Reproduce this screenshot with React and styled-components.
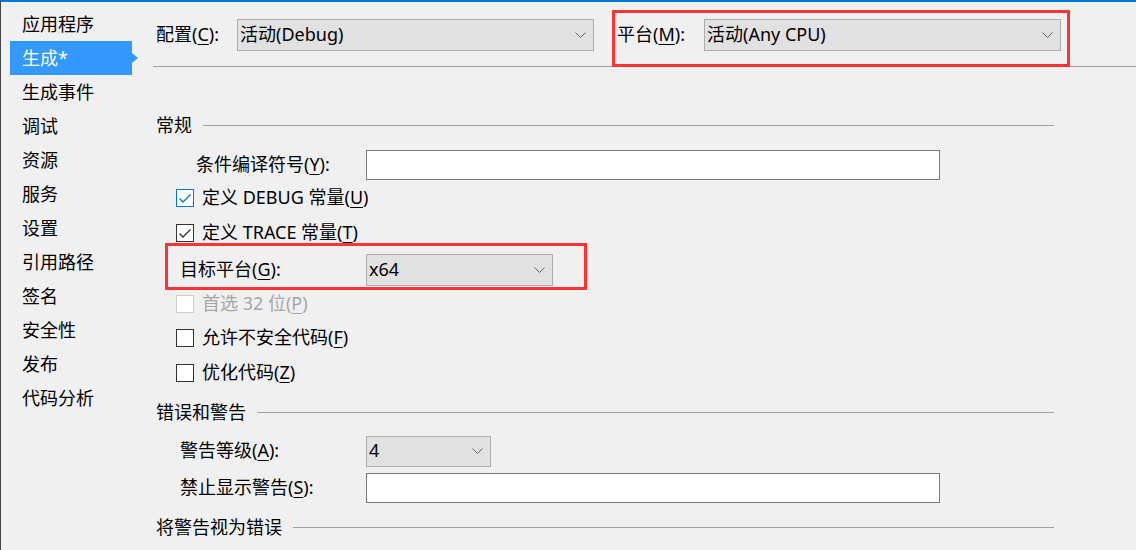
import React from "react";
import styled, { createGlobalStyle, css } from "styled-components";

const Global = createGlobalStyle`
  html, body { margin: 0; padding: 0; overflow: hidden; }
  body {
    font-family: "Noto Sans", "Noto Sans CJK SC", sans-serif;
    font-size: 18px;
    color: #000;
    background: #f0f0f0;
  }
  *, *::before, *::after { box-sizing: border-box; }
`;

const Window = styled.div`
  width: 1136px;
  height: 550px;
  display: flex;
  background: #f0f0f0;
  border-top: 2px solid #0078d7;
  border-left: 1px solid #454545;
  overflow: hidden;
`;

const Sidebar = styled.nav`
  width: 137px;
  flex: none;
  padding-top: 5px;
  display: flex;
  flex-direction: column;
`;

const NavItem = styled.div`
  position: relative;
  height: 34px;
  width: 122px;
  margin-left: 9px;
  padding-left: 12px;
  padding-top: 1px;
  display: flex;
  align-items: center;
  line-height: 1.2;
  white-space: nowrap;
  ${(p) =>
    p.$active &&
    css`
      background: #3399ff;
      color: #fff;
      &::after {
        content: "";
        position: absolute;
        left: 100%;
        top: 50%;
        transform: translateY(-50%);
        border-left: 6px solid #3399ff;
        border-top: 5.5px solid transparent;
        border-bottom: 5.5px solid transparent;
      }
    `}
`;

const Main = styled.main`
  flex: 1;
  margin-left: 15px;
  display: flex;
  flex-direction: column;
  min-width: 0;
`;

const TopBar = styled.div`
  height: 65px;
  flex: none;
  padding-top: 2px;
  padding-left: 3px;
  border-bottom: 1px solid #a0a0a0;
  display: flex;
  align-items: center;
`;

const TopGroup = styled.div`
  position: relative;
  display: flex;
  align-items: center;
  margin-left: ${(p) => p.$ml || 0}px;
  ${(p) =>
    p.$highlight &&
    css`
      &::after {
        content: "";
        position: absolute;
        left: -5px;
        top: -9px;
        width: 458px;
        height: 57px;
        border: 3px solid #ff3333;
        pointer-events: none;
      }
    `}
`;

const TopLabel = styled.span`
  width: ${(p) => p.$w}px;
  line-height: 1.2;
  white-space: nowrap;
`;

const Mn = styled.u`
  text-decoration: underline;
  text-decoration-thickness: 1px;
  text-underline-offset: 3px;
`;

const Select = styled.div`
  width: ${(p) => p.$w}px;
  height: ${(p) => p.$h || 32}px;
  background: #e1e1e1;
  border: 1px solid #adadad;
  display: flex;
  align-items: center;
  justify-content: space-between;
  padding: 0 7px 0 2px;
  line-height: 1.2;
  white-space: nowrap;
  flex: none;
`;

const TextBox = styled.div`
  width: ${(p) => p.$w}px;
  height: 30px;
  background: #fff;
  border: 1px solid #7a7a7a;
  flex: none;
`;

const Content = styled.div`
  padding-left: 3px;
  padding-right: 82px;
  display: flex;
  flex-direction: column;
`;

const Row = styled.div`
  position: relative;
  height: 32px;
  margin-top: ${(p) => p.$mt}px;
  display: flex;
  align-items: center;
  line-height: 1.2;
  white-space: nowrap;
  ${(p) =>
    p.$highlight &&
    css`
      &::after {
        content: "";
        position: absolute;
        left: 9px;
        top: -11px;
        width: 422px;
        height: 47px;
        border: 3px solid #ff3333;
        pointer-events: none;
      }
    `}
`;

const HeaderLine = styled.div`
  flex: 1;
  height: 1px;
  background: #a0a0a0;
  margin-left: 11px;
  margin-bottom: 2px;
`;

const FieldLabel = styled.span`
  width: 210px;
  padding-left: ${(p) => p.$indent}px;
  flex: none;
`;

const CheckRow = styled(Row)`
  padding-left: 20px;
  color: ${(p) => (p.$disabled ? "#a6a6a6" : "#000")};
`;

const Box = styled.span`
  width: 18px;
  height: 18px;
  flex: none;
  margin-right: 8px;
  background: #fff;
  border: 1px solid
    ${(p) => (p.$disabled ? "#cccccc" : p.$hover ? "#0078d7" : "#333333")};
  display: flex;
  align-items: center;
  justify-content: center;
`;

const Chevron = () => (
  <svg width="11" height="6" viewBox="0 0 11 6" aria-hidden="true">
    <path d="M0.5 0.5 L5.5 5.5 L10.5 0.5" fill="none" stroke="#606060" strokeWidth="1" />
  </svg>
);

const CheckMark = ({ color }) => (
  <svg width="16" height="16" viewBox="0 0 16 16" aria-hidden="true">
    <polyline points="2.5,8.5 6,12 13.5,4.5" fill="none" stroke={color} strokeWidth="1.4" />
  </svg>
);

function Checkbox({ checked, hover, disabled, children, mt }) {
  return (
    <CheckRow $mt={mt} $disabled={disabled}>
      <Box $hover={hover} $disabled={disabled}>
        {checked && <CheckMark color={hover ? "#0078d7" : "#333"} />}
      </Box>
      <span>{children}</span>
    </CheckRow>
  );
}

const navItems = [
  "应用程序",
  "生成*",
  "生成事件",
  "调试",
  "资源",
  "服务",
  "设置",
  "引用路径",
  "签名",
  "安全性",
  "发布",
  "代码分析",
];

export default function App() {
  return (
    <>
      <Global />
      <Window>
        <Sidebar>
          {navItems.map((n, i) => (
            <NavItem key={n} $active={i === 1}>
              {n}
            </NavItem>
          ))}
        </Sidebar>
        <Main>
          <TopBar>
            <TopGroup>
              <TopLabel $w={81}>
                配置(<Mn>C</Mn>):
              </TopLabel>
              <Select $w={357}>
                <span>活动(Debug)</span>
                <Chevron />
              </Select>
            </TopGroup>
            <TopGroup $ml={23} $highlight>
              <TopLabel $w={87}>
                平台(<Mn>M</Mn>):
              </TopLabel>
              <Select $w={357}>
                <span>活动(Any CPU)</span>
                <Chevron />
              </Select>
            </TopGroup>
          </TopBar>
          <Content>
            <Row $mt={43}>
              <span>常规</span>
              <HeaderLine />
            </Row>
            <Row $mt={7}>
              <FieldLabel $indent={40}>
                条件编译符号(<Mn>Y</Mn>):
              </FieldLabel>
              <TextBox $w={574} />
            </Row>
            <Checkbox mt={1} checked hover>
              定义 DEBUG 常量(<Mn>U</Mn>)
            </Checkbox>
            <Checkbox mt={3} checked>
              定义 TRACE 常量(<Mn>T</Mn>)
            </Checkbox>
            <Row $mt={5} $highlight>
              <FieldLabel $indent={24}>
                目标平台(<Mn>G</Mn>):
              </FieldLabel>
              <Select $w={187}>
                <span>x64</span>
                <Chevron />
              </Select>
            </Row>
            <Checkbox mt={2} disabled>
              首选 32 位(<Mn>P</Mn>)
            </Checkbox>
            <Checkbox mt={2}>
              允许不安全代码(<Mn>F</Mn>)
            </Checkbox>
            <Checkbox mt={3}>
              优化代码(<Mn>Z</Mn>)
            </Checkbox>
            <Row $mt={8}>
              <span>错误和警告</span>
              <HeaderLine />
            </Row>
            <Row $mt={6}>
              <FieldLabel $indent={24}>
                警告等级(<Mn>A</Mn>):
              </FieldLabel>
              <Select $w={125} $h={31}>
                <span>4</span>
                <Chevron />
              </Select>
            </Row>
            <Row $mt={5}>
              <FieldLabel $indent={24}>
                禁止显示警告(<Mn>S</Mn>):
              </FieldLabel>
              <TextBox $w={574} />
            </Row>
            <Row $mt={8}>
              <span>将警告视为错误</span>
              <HeaderLine />
            </Row>
          </Content>
        </Main>
      </Window>
    </>
  );
}
